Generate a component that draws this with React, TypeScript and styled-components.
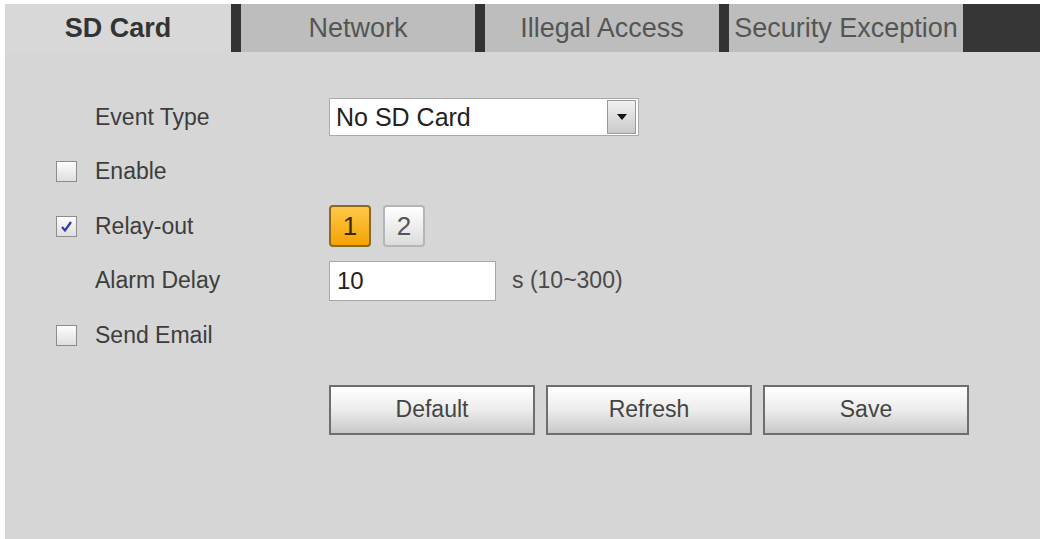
import styled, { createGlobalStyle } from "styled-components";

const GlobalStyle = createGlobalStyle`
  html, body {
    margin: 0;
    padding: 0;
    background: #ffffff;
    font-family: "Liberation Sans", Arial, sans-serif;
  }
`;

const Page = styled.div`
  padding: 4px 2px 0 5px;
  height: 539px;
  box-sizing: border-box;
  overflow: hidden;
`;

const Panel = styled.div`
  background: #d6d6d6;
  height: 535px;
  display: flex;
  flex-direction: column;
`;

const TabBar = styled.div`
  display: flex;
  height: 48px;
`;

const Tab = styled.div<{ $active?: boolean }>`
  width: ${(p) => (p.$active ? "226px" : "234px")};
  flex-shrink: 0;
  box-sizing: content-box;
  border-left: ${(p) => (p.$active ? "none" : "10px solid #333333")};
  background: ${(p) => (p.$active ? "#d8d8d8" : "#bdbdbd")};
  color: ${(p) => (p.$active ? "#333333" : "#555555")};
  font-weight: ${(p) => (p.$active ? "bold" : "normal")};
  font-size: 27px;
  display: flex;
  align-items: center;
  justify-content: center;
  white-space: nowrap;
`;

const TabFill = styled.div`
  flex: 1;
  background: #363636;
`;

const Form = styled.div`
  padding: 38px 0 0 51px;
  display: flex;
  flex-direction: column;
`;

const Row = styled.div`
  display: grid;
  grid-template-columns: 39px 234px auto;
  align-items: center;
  height: 54.5px;
`;

const Label = styled.span`
  font-size: 23px;
  color: #3d3d3d;
`;

const Box = styled.span`
  width: 19px;
  height: 19px;
  border: 1px solid #8c8c8c;
  background: linear-gradient(#fdfdfd, #dedede);
  display: flex;
  align-items: center;
  justify-content: center;
`;

const Select = styled.div`
  width: 302px;
  height: 36px;
  border: 1px solid #a9a9a9;
  background: #ffffff;
  display: flex;
  align-items: center;
  justify-content: space-between;
  padding-left: 6px;
  box-sizing: content-box;
  font-size: 25px;
  color: #222222;
`;

const Arrow = styled.span`
  width: 27px;
  height: 32px;
  margin-right: 2px;
  border: 1px solid #9a9a9a;
  background: linear-gradient(#f2f2f2, #c9c9c9);
  display: flex;
  align-items: center;
  justify-content: center;
`;

const Relays = styled.div`
  display: flex;
  gap: 12px;
`;

const Relay = styled.span<{ $on?: boolean }>`
  width: 38px;
  height: 38px;
  border-radius: 4px;
  border: 2px solid ${(p) => (p.$on ? "#8a6a22" : "#b5b5b5")};
  background: ${(p) =>
    p.$on
      ? "linear-gradient(#ffc84a, #f5a300)"
      : "linear-gradient(#ffffff, #dcdcdc)"};
  color: ${(p) => (p.$on ? "#3a2a00" : "#555555")};
  font-size: 26px;
  display: flex;
  align-items: center;
  justify-content: center;
`;

const Control = styled.div`
  display: flex;
  align-items: center;
  gap: 16px;
`;

const Input = styled.div`
  width: 158px;
  height: 38px;
  border: 1px solid #a9a9a9;
  background: #ffffff;
  padding-left: 7px;
  font-size: 24px;
  color: #222222;
  display: flex;
  align-items: center;
`;

const Hint = styled.span`
  font-size: 23px;
  color: #4a4a4a;
`;

const Buttons = styled.div`
  display: flex;
  gap: 11px;
  margin: 22px 0 0 273px;
`;

const Button = styled.button`
  width: 206px;
  height: 50px;
  border: 2px solid #6e6e6e;
  background: linear-gradient(#ffffff 0%, #ececec 50%, #c8c8c8 100%);
  font-family: "Liberation Sans", Arial, sans-serif;
  font-size: 23px;
  color: #444444;
`;

function Checkbox({ checked }: { checked?: boolean }) {
  return (
    <Box>
      {checked && (
        <svg width="15" height="15" viewBox="0 0 15 15">
          <path d="M3 8 L6 11.5 L12 3" fill="none" stroke="#2c3fa8" strokeWidth="2.2" />
        </svg>
      )}
    </Box>
  );
}

export default function App() {
  return (
    <>
      <GlobalStyle />
      <Page>
        <Panel>
          <TabBar>
            <Tab $active>SD Card</Tab>
            <Tab>Network</Tab>
            <Tab>Illegal Access</Tab>
            <Tab>Security Exception</Tab>
            <TabFill />
          </TabBar>
          <Form>
            <Row>
              <span />
              <Label>Event Type</Label>
              <Select>
                No SD Card
                <Arrow>
                  <svg width="10" height="6" viewBox="0 0 10 6">
                    <path d="M0 0 H10 L5 6 Z" fill="#111" />
                  </svg>
                </Arrow>
              </Select>
            </Row>
            <Row>
              <Checkbox />
              <Label>Enable</Label>
              <span />
            </Row>
            <Row>
              <Checkbox checked />
              <Label>Relay-out</Label>
              <Relays>
                <Relay $on>1</Relay>
                <Relay>2</Relay>
              </Relays>
            </Row>
            <Row>
              <span />
              <Label>Alarm Delay</Label>
              <Control>
                <Input>10</Input>
                <Hint>s (10~300)</Hint>
              </Control>
            </Row>
            <Row>
              <Checkbox />
              <Label>Send Email</Label>
              <span />
            </Row>
            <Buttons>
              <Button>Default</Button>
              <Button>Refresh</Button>
              <Button>Save</Button>
            </Buttons>
          </Form>
        </Panel>
      </Page>
    </>
  );
}
